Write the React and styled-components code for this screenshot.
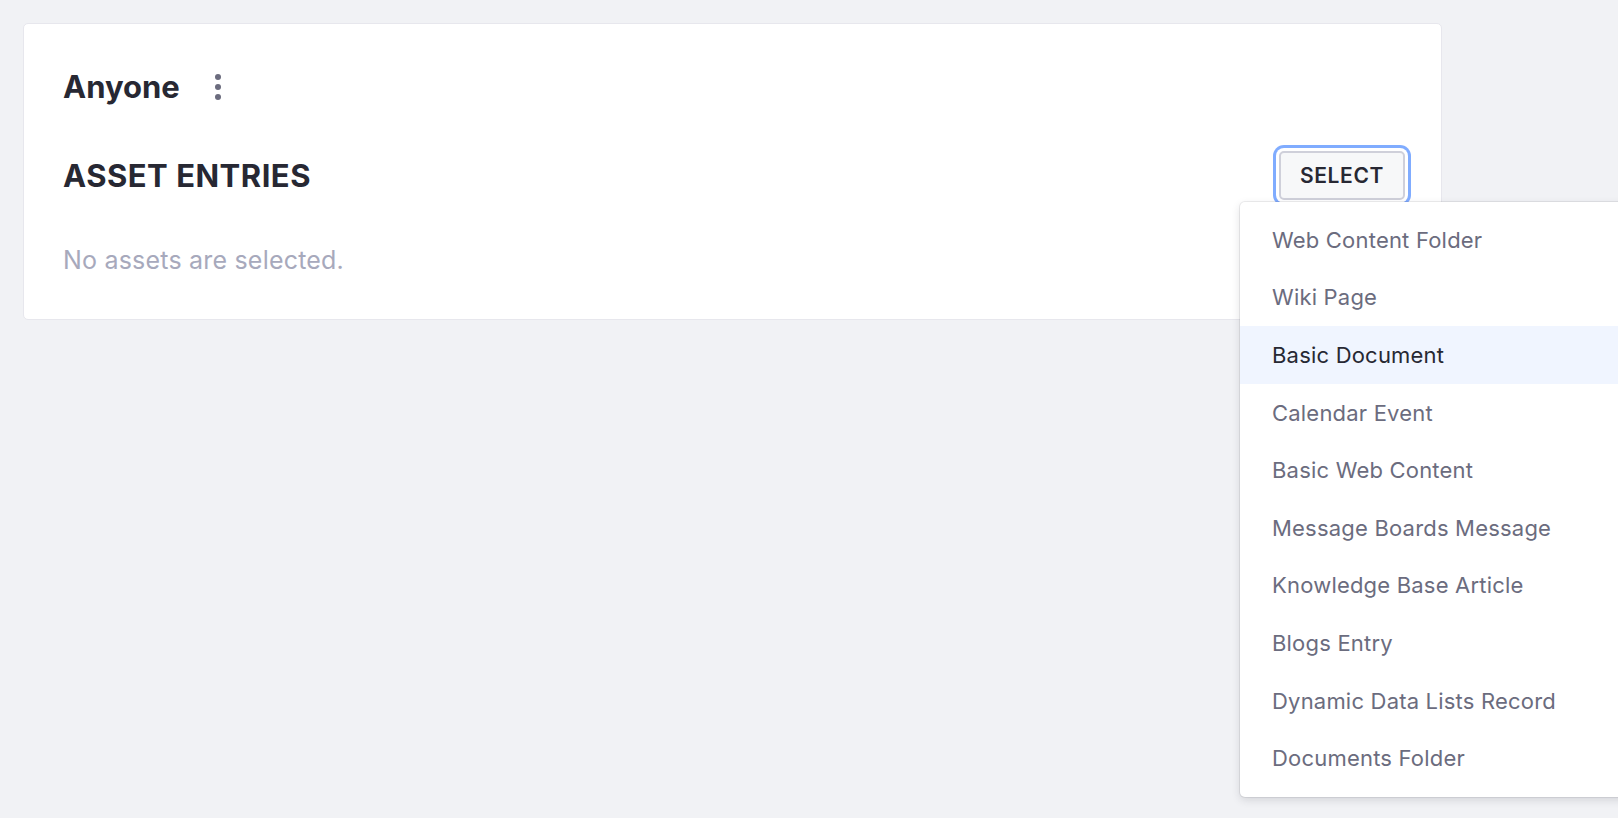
import React from 'react';
import styled, { createGlobalStyle } from 'styled-components';

const GlobalStyle = createGlobalStyle`
  html, body {
    margin: 0;
    padding: 0;
    background: #f1f2f5;
    overflow: hidden;
  }
  body {
    font-family: Inter, "Noto Sans", sans-serif;
    color: #272833;
  }
`;

const Page = styled.div`
  height: 818px;
  padding: 23px 0 0 23px;
  box-sizing: border-box;
`;

const Card = styled.div`
  width: 1419px;
  box-sizing: border-box;
  background: #fff;
  border: 1px solid #e7e7ed;
  border-radius: 5px;
  padding: 43px 36px 43px 39px;
  display: flex;
  flex-direction: column;
`;

const Header = styled.div`
  display: flex;
  align-items: center;
  gap: 35px;
  height: 40px;
`;

const Title = styled.h2`
  margin: 0;
  font-size: 31px;
  font-weight: 700;
  line-height: 40px;
  color: #272833;
`;

const Kebab = styled.button`
  border: 0;
  background: none;
  padding: 0;
  display: flex;
  flex-direction: column;
  gap: 4px;
  cursor: pointer;
`;

const Dot = styled.span`
  width: 6px;
  height: 6px;
  border-radius: 50%;
  background: #6b6c7e;
`;

const SectionRow = styled.div`
  display: flex;
  align-items: center;
  justify-content: space-between;
  margin-top: 44px;
  height: 49px;
`;

const SectionTitle = styled.h3`
  margin: 0;
  font-size: 31px;
  font-weight: 700;
  letter-spacing: 0.5px;
  line-height: 40px;
  color: #272833;
`;

const SelectWrap = styled.div`
  position: relative;
`;

const SelectButton = styled.button`
  box-sizing: border-box;
  width: 126px;
  height: 49px;
  border: 2px solid #cfd0da;
  border-radius: 5px;
  background: #f7f8f9;
  color: #272833;
  font-family: Inter, "Noto Sans", sans-serif;
  font-size: 21px;
  font-weight: 600;
  letter-spacing: 0.6px;
  box-shadow: 0 0 0 3px #fff, 0 0 0 6px #80acff;
  cursor: pointer;
`;

const Empty = styled.p`
  margin: 44px 0 0;
  font-size: 25px;
  letter-spacing: 0.2px;
  line-height: 32px;
  color: #a7a9bc;
`;

const Menu = styled.ul`
  position: absolute;
  top: calc(100% + 2px);
  left: -39px;
  width: 420px;
  margin: 0;
  padding: 9px 0 10px;
  list-style: none;
  background: #fff;
  border-radius: 5px;
  box-shadow: 0 0 0 1px rgba(39, 40, 51, 0.08), 0 3px 8px rgba(39, 40, 51, 0.15);
  z-index: 10;
`;

const MenuItem = styled.li`
  height: 57.6px;
  display: flex;
  align-items: center;
  padding-left: 32px;
  font-size: 22px;
  letter-spacing: 0.2px;
  color: ${(p) => (p.active ? '#272833' : '#6b6c7e')};
  background: ${(p) => (p.active ? '#f0f5ff' : 'transparent')};
  cursor: pointer;
`;

const items = [
  'Web Content Folder',
  'Wiki Page',
  'Basic Document',
  'Calendar Event',
  'Basic Web Content',
  'Message Boards Message',
  'Knowledge Base Article',
  'Blogs Entry',
  'Dynamic Data Lists Record',
  'Documents Folder',
];

const App = () => (
  <>
    <GlobalStyle />
    <Page>
      <Card>
        <Header>
          <Title>Anyone</Title>
          <Kebab aria-label="Options">
            <Dot />
            <Dot />
            <Dot />
          </Kebab>
        </Header>
        <SectionRow>
          <SectionTitle>ASSET ENTRIES</SectionTitle>
          <SelectWrap>
            <SelectButton>SELECT</SelectButton>
            <Menu>
              {items.map((label) => (
                <MenuItem key={label} active={label === 'Basic Document'}>
                  {label}
                </MenuItem>
              ))}
            </Menu>
          </SelectWrap>
        </SectionRow>
        <Empty>No assets are selected.</Empty>
      </Card>
    </Page>
  </>
);

export default App;
